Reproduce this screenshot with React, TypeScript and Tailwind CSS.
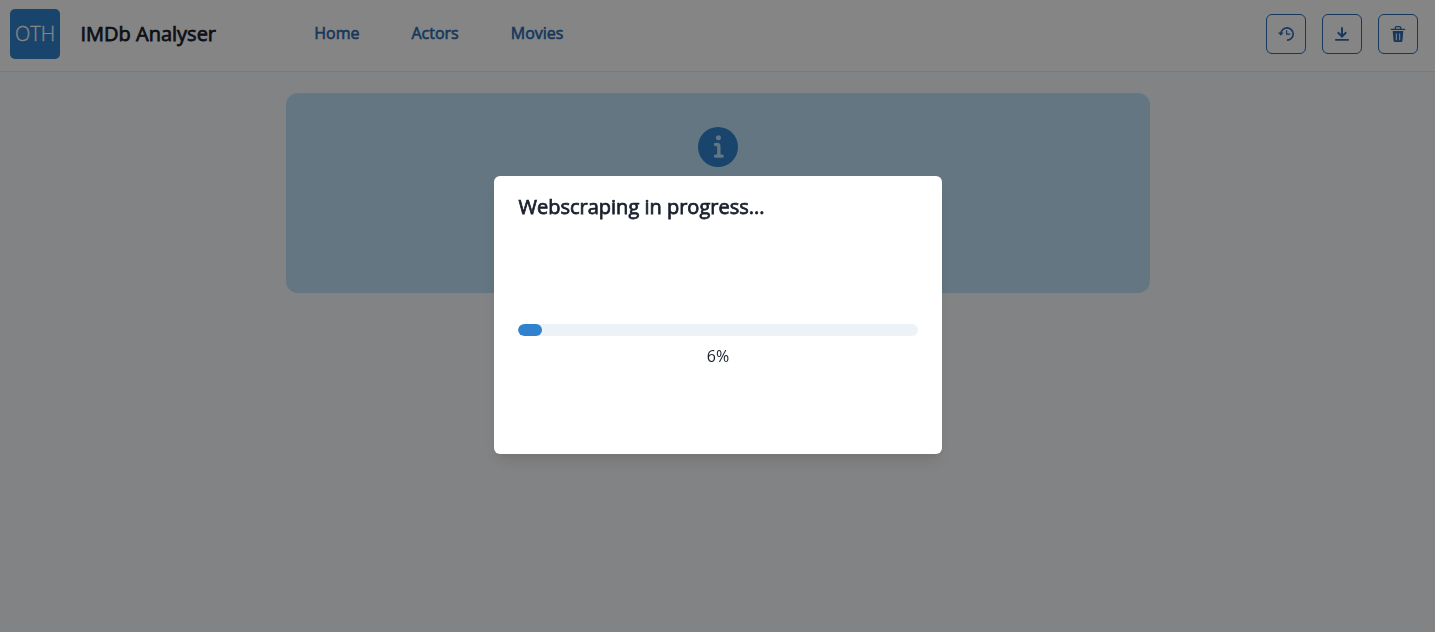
import type { ReactNode } from "react";

function HistoryIcon() {
  return (
    <svg viewBox="0 0 16 16" className="size-4" fill="none" stroke="currentColor">
      <path d="M2.9 7.5 A6.15 6.15 0 1 1 9 14.15" strokeWidth="1.6" />
      <path d="M8.6 4.2 V8.1 H12.3" strokeWidth="1.2" />
      <path d="M0 6.4 H5.6 L2.8 9.7 Z" fill="currentColor" stroke="none" />
    </svg>
  );
}

function DownloadIcon() {
  return (
    <svg viewBox="0 0 14 14" className="size-4" fill="currentColor">
      <path d="M11.2857,6.05714 L10.08571,4.85714 L7.85714,7.14786 L7.85714,1 L6.14286,1 L6.14286,7.14786 L3.91429,4.85714 L2.71429,6.05714 L7,10.42857 L11.2857,6.05714 Z M1,11.2857 L1,13 L13,13 L13,11.2857 L1,11.2857 Z" />
    </svg>
  );
}

function DeleteIcon() {
  return (
    <svg viewBox="0 0 24 24" className="size-4" fill="currentColor">
      <path d="M19.452 7.5H4.547a.5.5 0 00-.5.545l1.287 14.136A2 2 0 007.326 24h9.347a2 2 0 001.992-1.819L19.95 8.045a.5.5 0 00-.129-.382.5.5 0 00-.369-.163zm-9.2 13a.75.75 0 01-1.5 0v-9a.75.75 0 011.5 0zm5 0a.75.75 0 01-1.5 0v-9a.75.75 0 011.5 0zM22 4h-4.75a.25.25 0 01-.25-.25V2.5A2.5 2.5 0 0014.5 0h-5A2.5 2.5 0 007 2.5v1.25a.25.25 0 01-.25.25H2a1 1 0 000 2h20a1 1 0 000-2zM9 3.75V2.5a.5.5 0 01.5-.5h5a.5.5 0 01.5.5v1.25a.25.25 0 01-.25.25h-5.5A.25.25 0 019 3.75z" />
    </svg>
  );
}

function InfoIcon() {
  return (
    <svg viewBox="0 0 24 24" className="size-10 text-[#3182ce]" fill="currentColor">
      <path d="M12,0A12,12,0,1,0,24,12,12.013,12.013,0,0,0,12,0Zm.25,5a1.5,1.5,0,1,1-1.5,1.5A1.5,1.5,0,0,1,12.25,5ZM14.5,18.5h-4a1,1,0,0,1,0-2h.75a.25.25,0,0,0,.25-.25v-4.5a.25.25,0,0,0-.25-.25H10.5a1,1,0,0,1,0-2h1a2,2,0,0,1,2,2v4.75a.25.25,0,0,0,.25.25h.75a1,1,0,1,1,0,2Z" />
    </svg>
  );
}

function IconButton({ label, children }: { label: string; children: ReactNode }) {
  return (
    <button
      aria-label={label}
      className="flex size-10 items-center justify-center rounded-md border border-[#2b6cb0] text-[#2b6cb0]"
    >
      {children}
    </button>
  );
}

function Header() {
  return (
    <header className="flex h-[72px] items-start border-b border-[#e2e8f0] bg-white pr-[17px] pl-2.5">
      <div className="mt-[9px] flex size-[50px] items-center justify-center rounded-[5px] bg-[#3182ce] text-xl font-light text-white [-webkit-text-stroke:0.3px_currentColor]">
        OTH
      </div>
      <h1 className="mt-5 ml-[20.5px] w-[234px] text-xl leading-7 [-webkit-text-stroke:0.75px_currentColor]">IMDb Analyser</h1>
      <nav className="mt-[21px] -ml-[0.25px] flex gap-[52px] text-base leading-6 text-[#2b6cb0] [-webkit-text-stroke:0.6px_currentColor]">
        <a>Home</a>
        <a>Actors</a>
        <a>Movies</a>
      </nav>
      <div className="mt-3.5 ml-auto flex gap-4">
        <IconButton label="History">
          <HistoryIcon />
        </IconButton>
        <IconButton label="Download">
          <DownloadIcon />
        </IconButton>
        <IconButton label="Delete">
          <DeleteIcon />
        </IconButton>
      </div>
    </header>
  );
}

function ProgressModal({ value }: { value: number }) {
  return (
    <div className="fixed inset-0 flex items-start justify-center bg-black/48 pt-44 pl-px">
      <section
        role="dialog"
        className="h-[278px] w-[448px] rounded-md bg-white px-6 pt-4 shadow-[0_10px_15px_-3px_rgba(0,0,0,0.1),0_4px_6px_-2px_rgba(0,0,0,0.05)]"
      >
        <h2 className="pl-[0.5px] text-xl leading-[30px] [-webkit-text-stroke:0.75px_currentColor]">Webscraping in progress...</h2>
        <div className="mt-[102px] h-3 overflow-hidden rounded-full bg-[#edf2f7]">
          <div className="h-full rounded-full bg-[#3182ce]" style={{ width: `${value}%` }} />
        </div>
        <p className="mt-2 text-center text-base leading-6">{value}%</p>
      </section>
    </div>
  );
}

export default function App() {
  return (
    <div className="h-screen overflow-hidden bg-[#fafbfd] font-['Open_Sans',sans-serif] text-[#1a202c]">
      <Header />
      <main className="flex justify-center pt-[21px] pl-px">
        <div className="flex h-[200px] w-[864px] justify-center rounded-xl bg-[#bee3f8] pt-[34px]">
          <InfoIcon />
        </div>
      </main>
      <ProgressModal value={6} />
    </div>
  );
}
